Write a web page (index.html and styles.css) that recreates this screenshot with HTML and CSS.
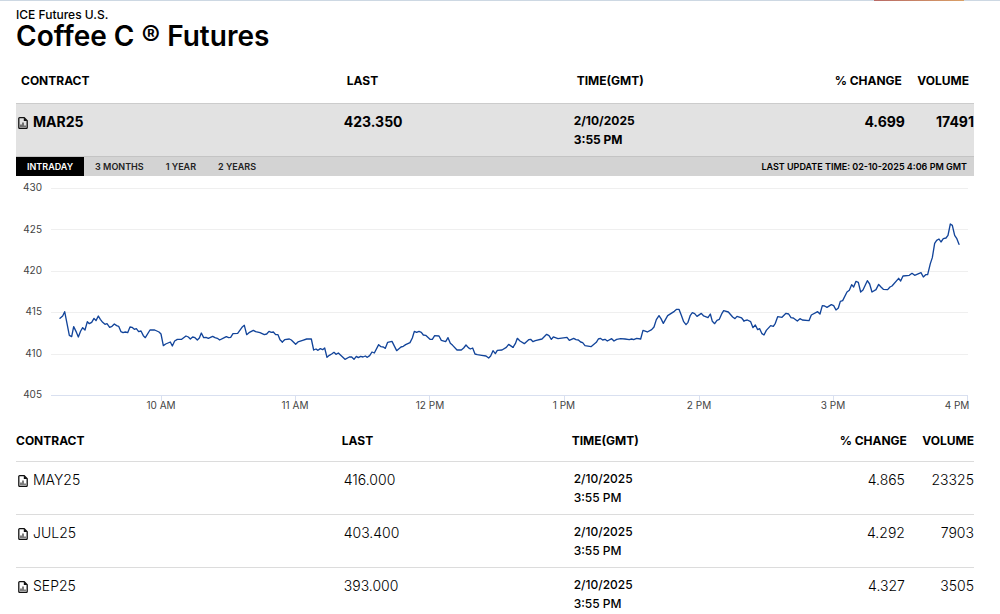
FILE: index.html
```html
<!DOCTYPE html>
<html lang="en">
<head>
	<meta charset="UTF-8">
	<meta name="viewport" content="width=device-width, initial-scale=1">
	<title>Coffee C ® Futures</title>
	<link rel="stylesheet" href="styles.css">
</head>
<body>
<!-- contract icon, reused in every row -->
<svg class="defs" width="0" height="0" aria-hidden="true">
	<symbol id="doc" viewBox="0 0 10 12">
		<path d="M1.6.7h4.6l3 3v6.9a.8.8 0 0 1-.8.8H1.6a.8.8 0 0 1-.8-.8V1.5a.8.8 0 0 1 .8-.8z" fill="none" stroke="#111" stroke-width="1.3"/>
		<path d="M5.8.7v3.4h3.4z" fill="#111"/>
		<path d="M3 7.5v2.7M5 5.4v4.8M7 8.4v1.8" fill="none" stroke="#111" stroke-width="1.1"/>
	</symbol>
</svg>
<div class="banner"></div>
<main>
	<header>
		<p class="exchange">ICE Futures U.S.</p>
		<h1>Coffee C ® Futures</h1>
	</header>

	<table class="quotes selected">
		<thead>
			<tr><th class="contract">CONTRACT</th><th class="last">LAST</th><th class="time">TIME(GMT)</th><th class="change">% CHANGE</th><th class="volume">VOLUME</th></tr>
		</thead>
		<tbody>
			<tr>
				<td><a href="#mar25"><svg class="icon"><use href="#doc"/></svg>MAR25</a></td>
				<td>423.350</td>
				<td class="time">2/10/2025<br>3:55 PM</td>
				<td class="change">4.699</td>
				<td class="volume">17491</td>
			</tr>
		</tbody>
	</table>

	<div class="toolbar">
		<button type="button" class="active">INTRADAY</button>
		<button type="button">3 MONTHS</button>
		<button type="button">1 YEAR</button>
		<button type="button">2 YEARS</button>
		<span class="updated">LAST UPDATE TIME: 02-10-2025 4:06 PM GMT</span>
	</div>

	<svg class="chart" viewBox="16 176 958 245" role="img" aria-label="Intraday price">
		<path class="grid" d="M51 188.5H968M51 229.5H968M51 271.5H968M51 312.5H968M51 354.5H968"/>
		<path class="axis" d="M51 395.5H968M161.5 396v5M295.5 396v5M429.5 396v5M564.5 396v5M699.5 396v5M833.5 396v5M967.5 396v5"/>
		<g class="ylabels">
			<text x="42" y="191">430</text>
			<text x="42" y="233">425</text>
			<text x="42" y="274">420</text>
			<text x="42" y="315">415</text>
			<text x="42" y="357">410</text>
			<text x="42" y="398">405</text>
		</g>
		<g class="xlabels">
			<text x="161" y="409">10 AM</text>
			<text x="295" y="409">11 AM</text>
			<text x="430" y="409">12 PM</text>
			<text x="564" y="409">1 PM</text>
			<text x="699" y="409">2 PM</text>
			<text x="833" y="409">3 PM</text>
			<text x="957" y="409">4 PM</text>
		</g>
		<!-- price line, three units per pixel -->
		<g class="line" transform="scale(.33333)">
			<polyline transform="translate(150 870)" points="30,85 38,78 44,65 48,85 58,136 65,140 71,110 78,124 85,141 92,123 98,113 105,120 112,95 118,101 125,97 132,85 138,92 145,78 151,88 158,97 165,103 171,101 179,112 186,109 193,102 200,107 206,109 213,125 219,128 226,126 233,128 240,111 246,112 253,118 259,116 266,125 273,123 280,137 286,143 300,120 314,120 327,126 333,132 340,167 347,162 361,156 367,168 374,153 382,148 395,148 408,138 415,141 421,147 428,141 435,143 442,150 448,144 454,129 461,143 468,142 475,145 488,139 495,143 502,145 509,150 523,143 529,140 536,143 542,142 549,131 563,130 576,112 583,106 590,134 597,128 610,121 617,125 630,128 643,134 650,132 657,124 664,127 670,126 677,134 684,134 690,149 697,156"/>
			<polyline transform="translate(840 930)" points="7,96 14,89 28,87 34,90 47,103 54,96 68,91 80,87 94,87 101,120 108,117 114,121 121,116 128,119 134,114 141,142 148,136 155,132 162,127 168,133 175,129 195,148 208,141 215,141 222,148 229,139 235,143 242,139 249,141 256,138 262,142 269,137 276,126 283,129 296,104 303,110 310,111 316,115 323,97 336,94 350,122 363,111 370,109 377,104 390,98 397,84 403,64 410,67 417,64 424,67 430,75 437,76 450,88 457,88 464,77 477,78 484,91 497,95 504,83 511,100 518,106 531,120 544,120 551,114 558,105 565,113 571,117 578,114 585,132 592,134 605,136 618,138 626,144 632,138 639,122 646,131 652,121 666,120 679,112 686,103 699,112"/>
			<polyline transform="translate(1530 870)" points="9,172 16,161 22,145 30,153 43,161 56,149 62,148 69,155 76,152 96,147 110,133 117,137 124,148 130,141 144,146 171,142 178,151 191,145 198,149 205,150 212,156 218,158 225,167 243,170 259,157 265,147 271,145 278,150 285,148 292,153 305,146 312,153 320,148 332,146 345,147 358,149 365,147 371,149 380,145 392,147 399,121 412,126 425,119 432,111 439,89 447,77 453,86 460,100 473,77 493,64 500,58 507,58 514,76 521,95 528,104 534,97 541,76 547,68 554,71 561,79 574,70 581,78 594,83 601,72 607,94 614,101 621,91 628,88 636,70 641,62 655,66 668,81 675,86 681,79 695,84 702,93"/>
			<polyline transform="translate(2220 630)" points="12,333 14,332 22,330 32,335 39,353 46,345 53,359 59,356 66,371 72,375 79,361 92,347 100,349 106,340 113,320 126,322 138,310 146,312 153,323 160,324 172,333 180,326 187,330 207,332 214,315 233,305 240,312 247,287 254,288 261,292 274,284 281,287 288,300 295,294 301,274 308,272 321,246 328,241 335,224 341,231 348,214 355,217 362,246 369,240 382,212 389,222 396,246 408,239 416,223 423,231 430,238 443,239 450,231 456,228 476,205 482,213 489,198 508,196 516,190 524,196 543,188 550,201 557,194 563,194 571,161 577,143 584,100 590,91 597,87 603,96 610,86 618,84 624,76 631,42 637,46 644,76 650,85 657,103"/>
		</g>
	</svg>

	<table class="quotes">
		<thead>
			<tr><th class="contract">CONTRACT</th><th class="last">LAST</th><th class="time">TIME(GMT)</th><th class="change">% CHANGE</th><th class="volume">VOLUME</th></tr>
		</thead>
		<tbody>
			<tr>
				<td><a href="#may25"><svg class="icon"><use href="#doc"/></svg>MAY25</a></td>
				<td>416.000</td>
				<td class="time">2/10/2025<br>3:55 PM</td>
				<td class="change">4.865</td>
				<td class="volume">23325</td>
			</tr>
			<tr>
				<td><a href="#jul25"><svg class="icon"><use href="#doc"/></svg>JUL25</a></td>
				<td>403.400</td>
				<td class="time">2/10/2025<br>3:55 PM</td>
				<td class="change">4.292</td>
				<td class="volume">7903</td>
			</tr>
			<tr>
				<td><a href="#sep25"><svg class="icon"><use href="#doc"/></svg>SEP25</a></td>
				<td>393.000</td>
				<td class="time">2/10/2025<br>3:55 PM</td>
				<td class="change">4.327</td>
				<td class="volume">3505</td>
			</tr>
		</tbody>
	</table>
</main>
</body>
</html>
```
FILE: styles.css
```css
* {
	box-sizing: border-box;
}
body {
	margin: 0;
	background: #fff;
	color: #000;
	font-family: Inter, "Liberation Sans", sans-serif;
}
.defs {
	position: absolute;
}
.banner {
	height: 1px;
	background: linear-gradient(90deg, #b86a66, #d9a066) 96% 0 / 9% 100% no-repeat #cdd8e3;
}
main {
	padding: 6px 26px 0 16px;
}
.exchange {
	margin: 0;
	font-size: 12px;
	line-height: 15px;
	font-weight: 500;
}
h1 {
	margin: 0;
	font-size: 28px;
	line-height: 28px;
	font-weight: 600;
}

.quotes {
	width: 100%;
	table-layout: fixed;
	border-collapse: collapse;
}
.quotes th {
	height: 40px;
	padding: 0;
	font-size: 12px;
	line-height: 16px;
	font-weight: 700;
	text-align: left;
	white-space: nowrap;
}
.quotes th.contract {
	width: 34%;
}
.quotes th.last {
	width: 24%;
}
.quotes th.time {
	width: 20%;
}
.quotes th.change {
	width: 15%;
}
.quotes th.volume {
	width: 7%;
}
.quotes td {
	height: 53px;
	padding: 8px 2px 0;
	border-top: 1px solid #dcdcdc;
	font-size: 14px;
	line-height: 20px;
	font-weight: 300;
	vertical-align: top;
}
.quotes td.time {
	padding-top: 7px;
	font-size: 12px;
	line-height: 19px;
	font-weight: 500;
}
.quotes .change, .quotes .volume {
	text-align: right;
}
.quotes td.volume {
	padding-right: 0;
}
.quotes a {
	display: flex;
	align-items: center;
	gap: 5px;
	color: inherit;
	text-decoration: none;
}
.icon {
	width: 10px;
	height: 12px;
	margin-top: 2px;
}

.selected th {
	height: 53px;
	padding: 10px 5px 0;
}
.selected td {
	background: #e2e2e2;
	border-color: #ccc;
	font-weight: 700;
}
.selected td.time {
	font-weight: 700;
}

.toolbar {
	display: flex;
	height: 20px;
	border-top: 1px solid #c4c4c4;
	background: #d3d3d3;
	font-size: 9px;
	font-weight: 600;
}
.toolbar button {
	padding: 0 11px;
	border: 0;
	background: none;
	color: #222;
	font: inherit;
}
.toolbar .active {
	background: #000;
	color: #fff;
}
.updated {
	margin-left: auto;
	padding-right: 7px;
	line-height: 19px;
}

.chart {
	display: block;
	width: 100%;
}
.chart .grid {
	stroke: #efefef;
}
.chart .axis {
	fill: none;
	stroke: #d9e0f0;
}
.chart text {
	fill: #444;
	font-size: 10px;
}
.ylabels {
	text-anchor: end;
}
.xlabels {
	text-anchor: middle;
}
.line {
	fill: none;
	stroke: #12449a;
	stroke-width: 4;
	stroke-linejoin: round;
	stroke-linecap: round;
}
```
